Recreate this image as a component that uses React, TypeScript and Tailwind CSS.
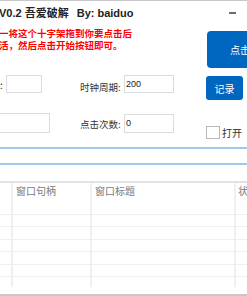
import React from "react";

const rowHeights = [12, 12, 13, 12, 13, 12, 10];

function Cells({ h, border, header }: { h: number; border: boolean; header?: boolean }) {
  return (
    <div
      className={`grid grid-cols-[13px_79px_144px_1fr] ${border ? "border-b border-[#efefef]" : ""}`}
      style={{ height: h }}
    >
      <div className="border-r-2 border-[#f0f0f0]" />
      <div className="border-r-2 border-[#f0f0f0] pl-[3px]">
        {header && <span className="block pt-[2px] leading-[12px] text-[10px] text-[#7a7a7a]">窗口句柄</span>}
      </div>
      <div className="border-r-2 border-[#f0f0f0] pl-[3px]">
        {header && <span className="block pt-[2px] leading-[12px] text-[10px] text-[#7a7a7a]">窗口标题</span>}
      </div>
      <div className="pl-[2px] overflow-hidden whitespace-nowrap">
        {header && <span className="block pt-[2px] leading-[12px] text-[10px] text-[#7a7a7a]">状态</span>}
      </div>
    </div>
  );
}

export default function App() {
  return (
    <div className="w-[247px] h-[296px] overflow-hidden bg-white flex flex-col border-t border-[#c8c8c8] font-['Noto_Sans_CJK_SC',sans-serif] text-[#333]">
      {/* title bar */}
      <div className="h-[24px] flex items-center justify-between shrink-0">
        <div className="-ml-[1px] whitespace-nowrap text-[11px] font-bold text-[#222] leading-[14px] font-['Liberation_Sans','Noto_Sans_CJK_SC',sans-serif]">
          <span>V0.2 吾爱破解</span>
          <span className="ml-[8px]">By: baiduo</span>
        </div>
        <div className="w-[7px] h-[2px] bg-[#6a6a6a] mr-[11px]" />
      </div>

      {/* red hint + big button */}
      <div className="h-[50px] flex shrink-0">
        <div className="w-[207px] shrink-0 mt-[2px] text-[9.5px] leading-[12px] font-bold text-[#f00] whitespace-nowrap overflow-visible">
          <div className="-ml-[1px]">一将这个十字架拖到你要点击后</div>
          <div className="-ml-[1px]">活，然后点击开始按钮即可。</div>
        </div>
        <div className="mt-[6px] h-[37px] w-[80px] shrink-0 rounded-[4px] bg-[#0067c0] text-white text-[10px] flex items-center pl-[23px] whitespace-nowrap">
          点击开始
        </div>
      </div>

      {/* row 1 */}
      <div className="h-[25px] flex items-start shrink-0">
        <div className="w-[6px] shrink-0 text-[10px] leading-[18px] mt-[1px] text-[#222]">:</div>
        <div className="w-[36px] h-[18px] shrink-0 border border-[#dcdcdc]" />
        <div className="ml-[38px] w-[44px] shrink-0 mt-[6px] text-[9.5px] leading-[12px] whitespace-nowrap">时钟周期:</div>
        <div className="w-[50px] h-[18px] shrink-0 border border-[#dcdcdc] pl-[1px] text-[9px] leading-[16px] font-['Liberation_Sans',sans-serif] text-[#222]">200</div>
        <div className="ml-[32px] mt-[1px] w-[37px] h-[24px] shrink-0 rounded-[3px] bg-[#0067c0] text-white text-[10px] flex items-center justify-center">记录</div>
      </div>

      {/* row 2 */}
      <div className="mt-[13px] h-[26px] flex items-start shrink-0">
        <div className="-ml-[2px] w-[52px] h-[20px] shrink-0 border border-[#dcdcdc]" />
        <div className="ml-[30px] w-[44px] shrink-0 mt-[5px] text-[9.5px] leading-[12px] whitespace-nowrap">点击次数:</div>
        <div className="mt-[1px] w-[50px] h-[19px] shrink-0 border border-[#dcdcdc] pl-[1px] text-[9px] leading-[17px] font-['Liberation_Sans',sans-serif] text-[#222]">0</div>
        <div className="ml-[32px] mt-[13px] w-[14px] h-[13px] shrink-0 border border-[#b8b8b8]" />
        <div className="ml-[2px] mt-[14px] text-[10px] leading-[12px] whitespace-nowrap">打开</div>
      </div>

      {/* blue edit box */}
      <div className="mt-[8px] h-[18px] shrink-0 border-y-2 border-[#a3c7eb]" />

      {/* table */}
      <div className="mt-[16px] h-[2px] shrink-0 bg-[#e2e2e2]" />
      <Cells h={20} border={false} header />
      {rowHeights.map((h, i) => (
        <Cells key={i} h={h} border={i < rowHeights.length - 1} />
      ))}
      <div className="flex-1" />
      <div className="h-[2px] shrink-0 bg-[#c8c8c8]" />
    </div>
  );
}
